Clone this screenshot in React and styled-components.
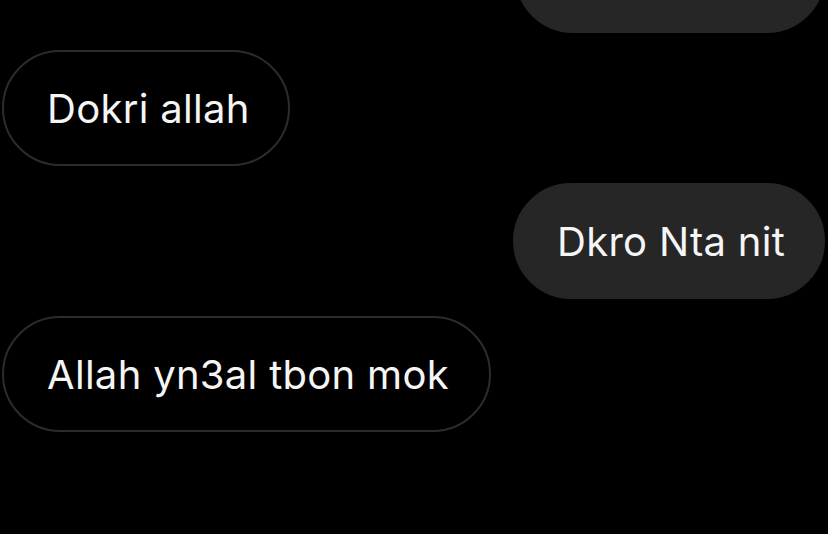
import React from "react";
import styled, { createGlobalStyle } from "styled-components";

const Global = createGlobalStyle`
  html, body { margin: 0; padding: 0; background: #000; }
  body { font-family: Inter, Roboto, "Noto Sans", "Liberation Sans", sans-serif; overflow: hidden; }
`;

const Thread = styled.div`
  display: flex;
  flex-direction: column;
  gap: 17px;
  width: 828px;
  height: 534px;
  margin-top: -83px;
  padding: 0 3px 0 2px;
  box-sizing: border-box;
`;

const Bubble = styled.div`
  box-sizing: border-box;
  height: 116px;
  border-radius: 58px;
  display: flex;
  align-items: center;
  padding: 0 ${(p) => (p.$mine ? 42 : 43)}px;
  font-size: 40px;
  letter-spacing: 0.3px;
  color: #f5f5f5;
  white-space: nowrap;
  align-self: ${(p) => (p.$mine ? "flex-end" : "flex-start")};
  background: ${(p) => (p.$mine ? "#262626" : "#000")};
  border: 2px solid ${(p) => (p.$mine ? "#262626" : "#2c2c2c")};
  width: ${(p) => p.$w}px;
`;

const messages = [
  { mine: true, text: "", w: 310 },
  { mine: false, text: "Dokri allah", w: 288 },
  { mine: true, text: "Dkro Nta nit", w: 312 },
  { mine: false, text: "Allah yn3al tbon mok", w: 489 },
];

export default function App() {
  return (
    <>
      <Global />
      <Thread>
        {messages.map((m, i) => (
          <Bubble key={i} $mine={m.mine} $w={m.w}>
            {m.text}
          </Bubble>
        ))}
      </Thread>
    </>
  );
}
